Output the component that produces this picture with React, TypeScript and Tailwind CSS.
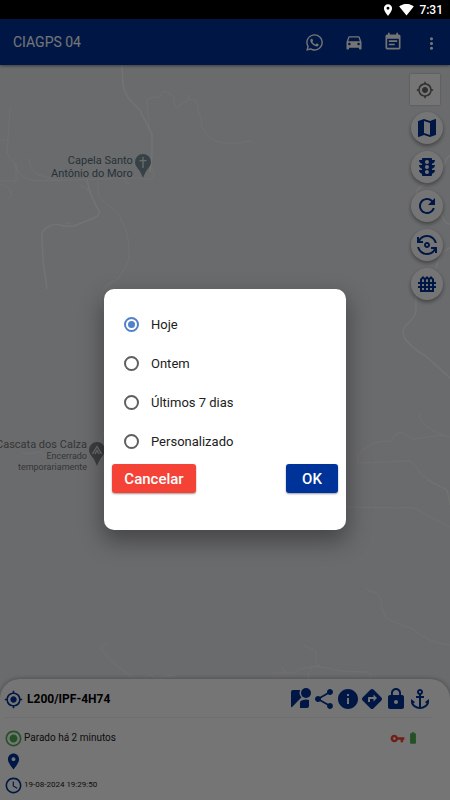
import type { ReactNode } from "react";
import { FaWhatsapp } from "react-icons/fa";
import {
  MdAccessTime,
  MdAnchor,
  MdBatteryFull,
  MdDirections,
  MdDirectionsCar,
  MdEventNote,
  MdFence,
  MdInfo,
  MdLocationOn,
  MdLock,
  MdMap,
  MdMoreVert,
  MdMyLocation,
  MdOutlineFlipCameraAndroid,
  MdRadioButtonChecked,
  MdRefresh,
  MdShare,
  MdSignalWifi4Bar,
  MdStreetview,
  MdTraffic,
  MdVpnKey,
} from "react-icons/md";

function StatusBar() {
  return (
    <div className="flex h-[19px] items-center justify-end gap-1 bg-black pr-[7px] text-white">
      <MdLocationOn size={14} />
      <MdSignalWifi4Bar size={15} />
      <span className="ml-px text-[12px] leading-4 font-medium">7:31</span>
    </div>
  );
}

function IconButton({ label, className, children }: { label: string; className: string; children: ReactNode }) {
  return (
    <button type="button" aria-label={label} className={`flex items-center justify-center ${className}`}>
      {children}
    </button>
  );
}

function TopBar() {
  const button = "h-10 w-[39px]";
  return (
    <header className="relative z-10 flex h-[46px] items-center bg-[#003399] pl-[13px] text-white shadow-[0_1px_3px_rgba(0,0,0,0.45)]">
      <h1 className="text-[14px] leading-5">CIAGPS 04</h1>
      <nav className="-mr-px ml-auto flex items-center">
        <IconButton label="WhatsApp" className={button}>
          <FaWhatsapp size={19} />
        </IconButton>
        <IconButton label="Veículos" className={button}>
          <MdDirectionsCar size={20} />
        </IconButton>
        <IconButton label="Eventos" className={button}>
          <MdEventNote size={20} />
        </IconButton>
        <IconButton label="Mais" className={`pt-[3px] ${button}`}>
          <MdMoreVert size={19} />
        </IconButton>
      </nav>
    </header>
  );
}

function Roads() {
  return (
    <svg
      aria-hidden="true"
      viewBox="0 65 450 635"
      preserveAspectRatio="xMidYMin slice"
      className="absolute inset-0 h-full w-full"
      fill="none"
      stroke="#fbfbfb"
      strokeLinejoin="round"
    >
      <g strokeWidth="1.4">
        <path d="M122 65 L123 84 Q125 98 139 109 Q145 120 152 134 L152 155 L150 172 M87 180 Q90 196 99 211 Q101 215 94 218 L74 226 Q66 227 60 225 Q53 223 48 227 Q41 230 42 238 L43 260 L47 289" />
        <path d="M450 155 Q444 161 442 171 M433 182 Q417 185 416 195 M441 214 Q445 224 450 224 M450 248 Q441 250 436 268 M416 296 L416 311 Q415 318 406 325 Q400 332 406 340 Q413 349 427 357 L450 378" />
      </g>
      <g strokeWidth="0.8" strokeOpacity="0.8">
        <path d="M10 108 L7 152 Q8 157 14 163 Q20 180 37 181 L66 180 L140 178 Q153 182 154 174 Q154 169 150 166 M29 158 Q29 173 42 176 L60 181 M0 140 H7 M16 163 V181 H0 M0 185 Q8 184 12 194 L8 199" />
        <path d="M98 181 L98 193 Q99 200 111 207 Q119 212 122 222 Q130 234 129 259 Q126 268 118 279 Q105 284 103 289 M80 185 L91 192 M125 179 V182 L129 184 M65 223 L71 224" />
        <path d="M149 129 L147 101 Q146 97 160 97 Q163 89 168 93 Q175 95 174 103 Q177 112 180 105 Q190 96 197 102 Q199 106 198 111 Q203 120 201 125 Q209 142 225 143 Q240 144 248 141 L253 142 M189 94 V99" />
        <path d="M419 414 Q419 425 442 435 L450 437 M442 435 L413 439 Q408 436 403 433 Q398 431 394 436 L391 441 Q373 441 366 448 L358 455 V463 L410 461 Q416 465 421 474 Q430 481 435 484 L447 490 L450 505" />
        <path d="M345 507 L402 508 Q412 505 427 515 L440 522 L450 527 M366 588 Q368 592 375 592 Q382 597 382 608 L386 618 Q395 623 413 629 Q430 644 450 645 M427 480 L447 490 L450 502" />
        <path d="M109 643 Q99 646 102 650 Q107 658 116 665 L137 681 M144 680 Q149 670 156 679 Q164 674 174 675 L180 681 M160 679 L172 675 M166 680 L174 675" />
        <path d="M303 645 L316 651 V666 L320 665 M273 673 H294 Q299 668 306 668 Q317 665 331 669 L341 671 L366 672 Q372 673 370 681 M312 667 Q307 673 308 681 M282 667 L286 673" />
        <path d="M115 281 Q97 291 101 306 L106 316 M22 453 L31 454 Q38 451 41 452 L45 456 M98 445 L104 432" />
      </g>
    </svg>
  );
}

function ChapelPin() {
  return (
    <svg aria-hidden="true" viewBox="0 0 16 24" className="h-6 w-4">
      <path fill="#78909c" d="M8 0a8 8 0 0 1 8 8c0 4-3.200 6.400-5 9.500C9.600 19.800 9 21.500 8 24c-1-2.500-1.600-4.200-3-6.500C3.200 14.400 0 12 0 8a8 8 0 0 1 8-8z" />
      <path stroke="#e8eaed" strokeWidth="1.300" d="M8 3v11M4.500 6.700h7" />
    </svg>
  );
}

function CampPin() {
  return (
    <svg aria-hidden="true" viewBox="0 0 16 24" className="h-6 w-4">
      <path fill="#80868b" d="M8 0a8 8 0 0 1 8 8c0 4-3.200 6.400-5 9.500C9.600 19.800 9 21.500 8 24c-1-2.500-1.600-4.200-3-6.500C3.200 14.400 0 12 0 8a8 8 0 0 1 8-8z" />
      <path fill="none" stroke="#e8eaed" strokeWidth="1.400" d="M3.500 11.800L8 4.500l4.500 7.300M6 12l2-3.500 2 3.500" />
    </svg>
  );
}

function MapControls() {
  const fab = "size-8 rounded-full bg-white text-[#003399] shadow-[0_2px_4px_rgba(0,0,0,0.4)]";
  return (
    <div className="relative flex flex-col items-end gap-[7px] px-[7px] pt-[9px]">
      <IconButton
        label="Minha localização"
        className="mr-[3px] h-[31px] w-[30px] bg-white text-[#666666] shadow-[0_0_2px_rgba(0,0,0,0.3)]"
      >
        <MdMyLocation size={18} />
      </IconButton>
      <IconButton label="Mapa" className={fab}>
        <MdMap size={24} />
      </IconButton>
      <IconButton label="Trânsito" className={fab}>
        <MdTraffic size={24} />
      </IconButton>
      <IconButton label="Atualizar" className={fab}>
        <MdRefresh size={24} />
      </IconButton>
      <IconButton label="Alternar" className={fab}>
        <MdOutlineFlipCameraAndroid size={24} />
      </IconButton>
      <IconButton label="Cercas" className={fab}>
        <MdFence size={24} />
      </IconButton>
    </div>
  );
}

function MapArea() {
  return (
    <main className="relative -mb-5 flex-1 overflow-hidden bg-[#e8eaed]">
      <Roads />
      <div className="absolute top-[89px] left-[51px] flex gap-[2px] text-right text-[11px] leading-[13px] text-[#546e7a]">
        <p>
          Capela Santo
          <br />
          Antônio do Moro
        </p>
        <ChapelPin />
      </div>
      <div className="absolute top-[373px] left-[-4px] flex gap-[2px] text-right text-[#757575]">
        <p className="text-[9px] leading-[11px]">
          <span className="text-[11px] leading-[13px]">Cascata dos Calza</span>
          <br />
          Encerrado
          <br />
          temporariamente
        </p>
        <div className="pt-1">
          <CampPin />
        </div>
      </div>
      <MapControls />
    </main>
  );
}

function VehicleSheet() {
  const action = "size-6";
  const row = "flex items-center gap-[1px]";
  return (
    <section className="relative rounded-t-[20px] bg-white pr-[18px] pb-[3px] pl-1 shadow-[0_0_5px_rgba(0,0,0,0.35)]">
      <div className="flex h-[39px] items-center border-b border-[#f0f0f0] pt-[2px] text-[#003399]">
        <MdMyLocation size={19} />
        <h2 className="ml-1 text-[12px] leading-4 font-bold text-black">L200/IPF-4H74</h2>
        <div className="ml-auto flex">
          <IconButton label="Street View" className={action}>
            <MdStreetview size={24} />
          </IconButton>
          <IconButton label="Compartilhar" className={action}>
            <MdShare size={24} />
          </IconButton>
          <IconButton label="Informações" className={action}>
            <MdInfo size={24} />
          </IconButton>
          <IconButton label="Rotas" className={action}>
            <MdDirections size={24} />
          </IconButton>
          <IconButton label="Bloquear" className={action}>
            <MdLock size={24} />
          </IconButton>
          <IconButton label="Âncora" className={action}>
            <MdAnchor size={24} />
          </IconButton>
        </div>
      </div>
      <div className="pt-2 text-[#212121]">
        <div className={`h-6 ${row}`}>
          <MdRadioButtonChecked size={19} className="text-[#4caf50]" />
          <span className="text-[10px] leading-4">Parado há 2 minutos</span>
          <MdVpnKey size={15} className="ml-auto text-[#f44336]" />
          <MdBatteryFull size={14} className="mr-3 text-[#4caf50]" />
        </div>
        <div className={`h-[23px] ${row}`}>
          <MdLocationOn size={19} className="text-[#003399]" />
        </div>
        <div className={`h-6 ${row}`}>
          <MdAccessTime size={19} className="text-[#003399]" />
          <time className="text-[8px] leading-4">19-08-2024 19:29:50</time>
        </div>
      </div>
    </section>
  );
}

const periods = ["Hoje", "Ontem", "Últimos 7 dias", "Personalizado"];

function PeriodDialog() {
  return (
    <div className="absolute inset-0 z-20 flex items-center justify-center bg-black/54">
      <form
        role="dialog"
        aria-label="Período"
        className="w-[242px] rounded-[10px] bg-white px-2 pt-4 pb-[37px] shadow-[0_10px_22px_2px_rgba(0,0,0,0.34)]"
      >
        {periods.map((period, index) => (
          <label key={period} className="flex h-[39px] items-center gap-3 pl-3 text-[13px] text-[#212121]">
            <input
              type="radio"
              name="period"
              defaultChecked={index === 0}
              className="size-[15px] appearance-none rounded-full border-2 border-[#5f5f5f] bg-clip-content p-[2px] checked:border-[#5181cb] checked:bg-[#5181cb]"
            />
            {period}
          </label>
        ))}
        <div className="mt-[3px] flex justify-between text-[15px] leading-5 font-medium text-white">
          <button type="button" className="h-[29px] w-[84px] rounded-[3px] bg-[#f44336] shadow-[0_1px_2px_rgba(0,0,0,0.4)]">
            Cancelar
          </button>
          <button type="button" className="h-[29px] w-[52px] rounded-[3px] bg-[#003399] shadow-[0_1px_2px_rgba(0,0,0,0.4)]">
            OK
          </button>
        </div>
      </form>
    </div>
  );
}

export default function App() {
  return (
    <div className="flex min-h-screen flex-col overflow-hidden font-[Roboto,sans-serif]">
      <StatusBar />
      <div className="relative flex flex-1 flex-col">
        <TopBar />
        <MapArea />
        <VehicleSheet />
        <PeriodDialog />
      </div>
    </div>
  );
}
